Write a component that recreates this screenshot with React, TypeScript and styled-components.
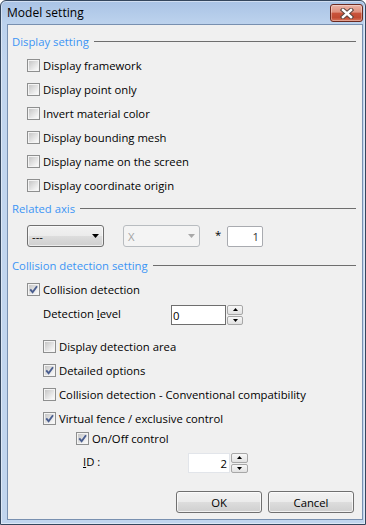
import React from "react";
import styled, { createGlobalStyle } from "styled-components";

const GlobalStyle = createGlobalStyle`
  html, body { margin: 0; padding: 0; background: #ffffff; }
  body { font-family: "Open Sans", "Noto Sans", sans-serif; }
  * { box-sizing: border-box; }
`;

const Window = styled.div`
  width: 366px;
  height: 525px;
  display: flex;
  flex-direction: column;
  border: 1px solid #34465d;
  border-radius: 6px 6px 0 0;
  background: linear-gradient(#a9c3e5 0px, #bcd2ed 22px, #c1d5ee 60px, #c1d5ee 100%);
  box-shadow: inset 0 0 0 1px rgba(255, 255, 255, 0.45);
  overflow: hidden;
`;

const TitleBar = styled.div`
  height: 23px;
  flex: none;
  display: flex;
  align-items: center;
  justify-content: space-between;
  padding: 0 2px 0 6px;
`;

const Title = styled.span`
  font-size: 12px;
  color: #000;
  letter-spacing: 0.05px;
`;

const CloseButton = styled.div`
  width: 33px;
  height: 18px;
  margin-top: 1px;
  border: 1px solid #6b2a20;
  border-radius: 3px;
  background: linear-gradient(#ebb3a5 0%, #df907d 44%, #c9533b 52%, #c24b32 78%, #d9745a 100%);
  box-shadow: inset 0 0 0 1px rgba(255, 255, 255, 0.35);
  display: flex;
  align-items: center;
  justify-content: center;
`;

const Client = styled.div`
  flex: 1;
  margin: 0 2px 4px 6px;
  border: 1px solid #7890b0;
  background: #f0f0f0;
  display: flex;
  flex-direction: column;
  padding: 8px 6px 0 4px;
`;

const GroupHeader = styled.div<{ $mt: number }>`
  display: flex;
  align-items: center;
  gap: 5px;
  height: 16px;
  margin-top: ${(p) => p.$mt}px;
  color: #3c95f5;
  font-size: 11.3px;
  white-space: nowrap;
  &::after {
    content: "";
    flex: 1;
    height: 1px;
    background: #6e6e6e;
  }
`;

const List = styled.div<{ $mt: number }>`
  display: flex;
  flex-direction: column;
  margin-top: ${(p) => p.$mt}px;
`;

const Row = styled.div<{ $indent: number; $h: number; $mt?: number }>`
  display: flex;
  align-items: center;
  gap: 2px;
  height: ${(p) => p.$h}px;
  margin-top: ${(p) => p.$mt ?? 0}px;
  padding-left: ${(p) => p.$indent}px;
  font-size: 11.3px;
  color: #000;
  white-space: nowrap;
`;

const BoxFrame = styled.span`
  flex: none;
  width: 13px;
  height: 13px;
  border: 1px solid #8e8f8f;
  background: #f4f4f4;
  padding: 1px;
  display: flex;
  margin-right: 1px;
`;

const BoxFill = styled.span`
  flex: 1;
  background: linear-gradient(135deg, #c6c6c6 0%, #e4e4e4 55%, #fbfbfb 100%);
  display: flex;
  align-items: center;
  justify-content: center;
  overflow: visible;
`;

const FieldLabel = styled.span<{ $w: number }>`
  width: ${(p) => p.$w}px;
  flex: none;
  padding-bottom: 3px;
`;

const ComboRow = styled.div`
  display: flex;
  align-items: center;
  height: 22px;
  margin-top: 9px;
  padding-left: 15px;
  font-size: 11.3px;
`;

const Combo = styled.div<{ $disabled?: boolean; $ml: number }>`
  width: 77px;
  height: 22px;
  margin-left: ${(p) => p.$ml}px;
  display: flex;
  align-items: center;
  justify-content: space-between;
  padding: 0 4px 0 4px;
  border: 1px solid ${(p) => (p.$disabled ? "#b8bcc0" : "#707070")};
  border-radius: 3px;
  background: ${(p) =>
    p.$disabled
      ? "#f4f4f4"
      : "linear-gradient(#f2f2f2 0%, #ebebeb 50%, #dddddd 50%, #cfcfcf 100%)"};
  box-shadow: ${(p) => (p.$disabled ? "none" : "inset 0 0 0 1px rgba(255,255,255,0.6)")};
  color: ${(p) => (p.$disabled ? "#a3a3a3" : "#000")};
`;

const Star = styled.span`
  align-self: flex-start;
  margin-left: 15px;
  width: 7px;
  padding-top: 2px;
  font-size: 11.3px;
  color: #000;
`;

const TextBox = styled.div`
  margin-left: 5px;
  width: 36px;
  height: 21px;
  border: 1px solid #a9abb0;
  border-radius: 2px;
  background: #fff;
  display: flex;
  align-items: center;
  justify-content: flex-end;
  padding-right: 3px;
  color: #333;
`;

const Spin = styled.div`
  display: flex;
  gap: 1px;
  height: 20px;
`;

const SpinInput = styled.div<{ $w: number; $right?: boolean; $border: string }>`
  width: ${(p) => p.$w}px;
  height: 20px;
  border: 1px solid ${(p) => p.$border};
  background: #fff;
  display: flex;
  align-items: center;
  justify-content: ${(p) => (p.$right ? "flex-end" : "flex-start")};
  padding: 0 2px 0 1px;
  font-size: 11.3px;
  color: #000;
`;

const SpinButtons = styled.div<{ $w: number }>`
  width: ${(p) => p.$w}px;
  display: flex;
  flex-direction: column;
  gap: 1px;
`;

const SpinBtn = styled.div`
  flex: 1;
  border: 1px solid #a7a7a7;
  border-radius: 2px;
  background: linear-gradient(#f8f8f8, #e1e1e1);
  display: flex;
  align-items: center;
  justify-content: center;
`;

const ButtonRow = styled.div`
  display: flex;
  justify-content: flex-end;
  gap: 6px;
  margin-top: 18px;
  padding-right: 2px;
`;

const PushButton = styled.button`
  width: 86px;
  height: 22px;
  border: 1px solid #707070;
  border-radius: 3px;
  background: linear-gradient(#f2f2f2 0%, #ebebeb 50%, #dddddd 50%, #cfcfcf 100%);
  box-shadow: inset 0 0 0 1px rgba(255, 255, 255, 0.7);
  font-family: inherit;
  font-size: 11.3px;
  color: #000;
  padding: 0;
`;

const CheckMark = () => (
  <svg width="9" height="9" viewBox="0 0 9 9" style={{ overflow: "visible" }}>
    <path d="M1.2 4.4 L3.6 7.2 L8 1.2" fill="none" stroke="#4a5e8f" strokeWidth="1.9" strokeLinejoin="miter" />
  </svg>
);

const CheckBox = ({ checked }: { checked?: boolean }) => (
  <BoxFrame>
    <BoxFill>{checked ? <CheckMark /> : null}</BoxFill>
  </BoxFrame>
);

const Arrow = ({ color, w = 7, h = 4 }: { color: string; w?: number; h?: number }) => (
  <svg width={w} height={h} viewBox={`0 0 ${w} ${h}`}>
    <polygon points={`0,0 ${w},0 ${w / 2},${h}`} fill={color} />
  </svg>
);

const UpArrow = () => (
  <svg width="5" height="3" viewBox="0 0 5 3">
    <polygon points="0,3 5,3 2.5,0" fill="#000" />
  </svg>
);

const DownArrow = () => (
  <svg width="5" height="3" viewBox="0 0 5 3">
    <polygon points="0,0 5,0 2.5,3" fill="#000" />
  </svg>
);

const CloseGlyph = () => (
  <svg width="14" height="11" viewBox="0 0 14 11">
    <path d="M3 2 L11 9 M11 2 L3 9" stroke="#5b4640" strokeWidth="4.4" strokeLinecap="square" />
    <path d="M3 2 L11 9 M11 2 L3 9" stroke="#ffffff" strokeWidth="2.4" strokeLinecap="square" />
  </svg>
);

const displayOptions = [
  "Display framework",
  "Display point only",
  "Invert material color",
  "Display bounding mesh",
  "Display name on the screen",
  "Display coordinate origin",
];

export default function App() {
  return (
    <>
      <GlobalStyle />
      <Window>
        <TitleBar>
          <Title>Model setting</Title>
          <CloseButton>
            <CloseGlyph />
          </CloseButton>
        </TitleBar>
        <Client>
          <GroupHeader $mt={0}>Display setting</GroupHeader>
          <List $mt={4}>
            {displayOptions.map((t) => (
              <Row key={t} $indent={15} $h={24}>
                <CheckBox />
                {t}
              </Row>
            ))}
          </List>

          <GroupHeader $mt={3}>Related axis</GroupHeader>
          <ComboRow>
            <Combo $ml={0}>
              <span>---</span>
              <Arrow color="#000" />
            </Combo>
            <Combo $ml={19} $disabled>
              <span>X</span>
              <Arrow color="#a8a8a8" />
            </Combo>
            <Star>*</Star>
            <TextBox>1</TextBox>
          </ComboRow>

          <GroupHeader $mt={10}>Collision detection setting</GroupHeader>
          <List $mt={4}>
            <Row $indent={15} $h={24}>
              <CheckBox checked />
              Collision detection
            </Row>
            <Row $indent={31} $h={20} $mt={4}>
              <FieldLabel $w={126}>
                Detection <u>l</u>evel
              </FieldLabel>
              <Spin>
                <SpinInput $w={55} $border="#6e6e6e">0</SpinInput>
                <SpinButtons $w={16}>
                  <SpinBtn>
                    <UpArrow />
                  </SpinBtn>
                  <SpinBtn>
                    <DownArrow />
                  </SpinBtn>
                </SpinButtons>
              </Spin>
            </Row>
          </List>
          <List $mt={9}>
            <Row $indent={31} $h={24}>
              <CheckBox />
              Display detection area
            </Row>
            <Row $indent={31} $h={24}>
              <CheckBox checked />
              Detailed options
            </Row>
            <Row $indent={31} $h={24}>
              <CheckBox />
              Collision detection - Conventional compatibility
            </Row>
            <Row $indent={31} $h={24}>
              <CheckBox checked />
              Virtual fence / exclusive control
            </Row>
            <Row $indent={64} $h={16}>
              <CheckBox checked />
              On/Off control
            </Row>
            <Row $indent={71} $h={20} $mt={7}>
              <FieldLabel $w={103}>
                <u>I</u>D :
              </FieldLabel>
              <Spin>
                <SpinInput $w={42} $right $border="#e2e5ea">2</SpinInput>
                <SpinButtons $w={17}>
                  <SpinBtn>
                    <UpArrow />
                  </SpinBtn>
                  <SpinBtn>
                    <DownArrow />
                  </SpinBtn>
                </SpinButtons>
              </Spin>
            </Row>
          </List>

          <ButtonRow>
            <PushButton>OK</PushButton>
            <PushButton>Cancel</PushButton>
          </ButtonRow>
        </Client>
      </Window>
    </>
  );
}
